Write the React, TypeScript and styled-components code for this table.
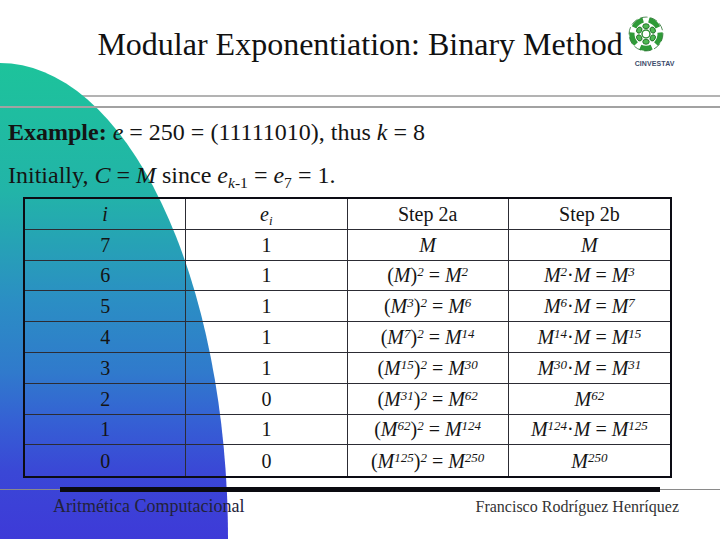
import { FunctionComponent, ReactNode } from 'react';
import { styled, createGlobalStyle } from 'styled-components';

const GlobalStyle = createGlobalStyle`
  html, body {
    margin: 0;
    padding: 0;
    background: #ffffff;
  }
`;

type Row = { i: string; e: string; a: ReactNode; b: ReactNode };

// M raised to a power, italic like the slide
const Pow: FunctionComponent<{ exp?: string }> = ({ exp }) => (
  <Var>
    M{exp && <Sup>{exp}</Sup>}
  </Var>
);

const Square: FunctionComponent<{ inner?: string; result: string }> = ({
  inner,
  result,
}) => (
  <>
    (<Pow exp={inner} />)<Sup>2</Sup> = <Pow exp={result} />
  </>
);

const Times: FunctionComponent<{ from: string; result: string }> = ({
  from,
  result,
}) => (
  <>
    <Pow exp={from} />
    <Dot>·</Dot>
    <Pow /> = <Pow exp={result} />
  </>
);

const rows: Row[] = [
  { i: '7', e: '1', a: <Pow />, b: <Pow /> },
  { i: '6', e: '1', a: <Square result="2" />, b: <Times from="2" result="3" /> },
  { i: '5', e: '1', a: <Square inner="3" result="6" />, b: <Times from="6" result="7" /> },
  { i: '4', e: '1', a: <Square inner="7" result="14" />, b: <Times from="14" result="15" /> },
  { i: '3', e: '1', a: <Square inner="15" result="30" />, b: <Times from="30" result="31" /> },
  { i: '2', e: '0', a: <Square inner="31" result="62" />, b: <Pow exp="62" /> },
  { i: '1', e: '1', a: <Square inner="62" result="124" />, b: <Times from="124" result="125" /> },
  { i: '0', e: '0', a: <Square inner="125" result="250" />, b: <Pow exp="250" /> },
];

const CinvestavMark: FunctionComponent = () => (
  <svg width="38" height="38" viewBox="0 0 40 40">
    <g fill="none" stroke="#2f9a38" strokeWidth="5.5" strokeLinecap="butt">
      <path d="M7.5 13 A15 15 0 0 1 17 5.3" />
      <path d="M23 5.3 A15 15 0 0 1 32.5 13" />
      <path d="M34.8 18.5 A15 15 0 0 1 30.5 30.5" />
      <path d="M26 33.8 A15 15 0 0 1 14 33.8" />
      <path d="M9.5 30.5 A15 15 0 0 1 5.2 18.5" />
    </g>
    <g fill="none" stroke="#1e6a25" strokeWidth="0.8">
      <circle cx="20" cy="20" r="17.8" strokeDasharray="8 3" />
    </g>
    <g fill="#4fb853" stroke="#1f6a25" strokeWidth="0.9">
      {[0, 60, 120, 180, 240, 300].map((deg) => (
        <ellipse
          key={deg}
          cx="20"
          cy="11.8"
          rx="3.4"
          ry="2.6"
          transform={`rotate(${deg} 20 20)`}
        />
      ))}
    </g>
    <circle cx="20" cy="20" r="4.2" fill="#ffffff" stroke="#2f8f35" strokeWidth="1.6" />
  </svg>
);

const App: FunctionComponent = () => (
  <>
    <GlobalStyle />
    <Slide>
      <Blob viewBox="0 0 720 539" preserveAspectRatio="none">
        <defs>
          <linearGradient id="blobFill" x1="0" y1="63" x2="0" y2="539" gradientUnits="userSpaceOnUse">
            <stop offset="0" stopColor="#1dc39b" />
            <stop offset="0.27" stopColor="#22b4a8" />
            <stop offset="0.5" stopColor="#2b8ec4" />
            <stop offset="0.65" stopColor="#307acc" />
            <stop offset="0.75" stopColor="#3561d4" />
            <stop offset="0.86" stopColor="#3a47d6" />
            <stop offset="1" stopColor="#3e3ad8" />
          </linearGradient>
        </defs>
        <ellipse cx="0" cy="539" rx="228" ry="476" fill="url(#blobFill)" />
      </Blob>

      <Header>
        <span />
        <Title>Modular Exponentiation: Binary Method</Title>
        <Logo>
          <CinvestavMark />
          <LogoText>CINVESTAV</LogoText>
        </Logo>
      </Header>
      <Rule $tone="#b3b3b3" />
      <Rule $tone="#a2a2a2" $raised />

      <Body>
        <TextLine>
          <Bold>Example:</Bold> <Var>e</Var> = 250 = (11111010), thus <Var>k</Var> = 8
        </TextLine>
        <TextLine>
          Initially, <Var>C</Var> = <Var>M</Var> since <Var>e</Var>
          <Sub>
            <Var>k</Var>-1
          </Sub>{' '}
          = <Var>e</Var>
          <Sub>7</Sub> = 1.
        </TextLine>

        <StepTable>
          <thead>
            <tr>
              <Cell>
                <Var>i</Var>
              </Cell>
              <Cell>
                <Var>e</Var>
                <Sub>
                  <Var>i</Var>
                </Sub>
              </Cell>
              <Cell>Step 2a</Cell>
              <Cell>Step 2b</Cell>
            </tr>
          </thead>
          <tbody>
            {rows.map((row) => (
              <tr key={row.i}>
                <Cell>{row.i}</Cell>
                <Cell>{row.e}</Cell>
                <Cell>{row.a}</Cell>
                <Cell>{row.b}</Cell>
              </tr>
            ))}
          </tbody>
        </StepTable>
      </Body>

      <FooterRule>
        <FooterBar />
      </FooterRule>
      <Footer>
        <FooterLeft>Aritmética Computacional</FooterLeft>
        <FooterRight>Francisco Rodríguez Henríquez</FooterRight>
      </Footer>
    </Slide>
  </>
);

const Slide = styled.div`
  position: relative;
  width: 720px;
  height: 539px;
  overflow: hidden;
  background: #ffffff;
  font-family: 'Liberation Serif', 'Times New Roman', serif;
  color: #141414;
`;

const Blob = styled.svg`
  position: absolute;
  top: 0;
  left: 0;
  width: 720px;
  height: 539px;
  pointer-events: none;
`;

const Header = styled.header`
  position: relative;
  display: grid;
  grid-template-columns: 1fr auto 1fr;
  height: 95px;
  padding-top: 15px;
  box-sizing: border-box;
`;

const Title = styled.h1`
  margin: 13px 0 0;
  font-size: 32px;
  line-height: 32px;
  font-weight: normal;
  color: #111111;
  white-space: nowrap;
`;

const Logo = styled.div`
  display: flex;
  flex-direction: column;
  align-items: flex-start;
  padding-left: 4px;
`;

const LogoText = styled.div`
  margin: 7px 0 0 8px;
  font-family: 'Liberation Sans', Arial, sans-serif;
  font-weight: bold;
  font-size: 7px;
  line-height: 8px;
  letter-spacing: 0.1px;
  color: #3c4c6c;
`;

const Rule = styled.div<{ $tone: string; $raised?: boolean }>`
  position: ${(p) => (p.$raised ? 'relative' : 'static')};
  height: 2px;
  margin-bottom: ${(p) => (p.$raised ? '0' : '9px')};
  background: ${(p) => p.$tone};
`;

const Body = styled.main`
  position: relative;
  padding-top: 3px;
`;

const TextLine = styled.p`
  margin: 0;
  padding-left: 8px;
  font-size: 24px;
  line-height: 43px;
  white-space: nowrap;
`;

const Bold = styled.b`
  font-weight: bold;
`;

const Var = styled.i`
  font-style: italic;
`;

const Sub = styled.sub`
  font-size: 0.65em;
  line-height: 0;
  vertical-align: -0.3em;
`;

const Sup = styled.sup`
  font-size: 0.65em;
  font-style: italic;
  line-height: 0;
  vertical-align: 0.45em;
`;

const Dot = styled.span`
  margin: 0;
`;

const StepTable = styled.table`
  margin-left: 23px;
  width: 649px;
  table-layout: fixed;
  border-collapse: separate;
  border-spacing: 0;
  border: 2.5px solid #0c0c14;
  font-size: 20px;
`;

const Cell = styled.td`
  height: 30.8px;
  padding: 0;
  box-sizing: border-box;
  text-align: center;
  font-weight: normal;
  line-height: 22px;
  white-space: nowrap;
  border-right: 1.5px solid #2c2c34;
  border-bottom: 1.5px solid #2c2c34;

  &:last-child {
    border-right: none;
  }

  tbody tr:last-child & {
    border-bottom: none;
  }
`;

const FooterRule = styled.div`
  position: relative;
  height: 5px;
  margin-top: 9px;
  background: linear-gradient(
    to bottom,
    transparent 2px,
    #8a8a8a 2px,
    #8a8a8a 3px,
    transparent 3px
  );
`;

const FooterBar = styled.div`
  width: 600px;
  height: 100%;
  margin-left: 60px;
  background: #0a0a10;
`;

const Footer = styled.footer`
  position: relative;
  display: flex;
  justify-content: space-between;
  align-items: baseline;
  margin-top: 4px;
  padding: 0 41px 0 53px;
  line-height: 20px;
`;

const FooterLeft = styled.span`
  font-size: 18px;
  color: #22223a;
`;

const FooterRight = styled.span`
  font-size: 16px;
  color: #333333;
`;

export default App;
